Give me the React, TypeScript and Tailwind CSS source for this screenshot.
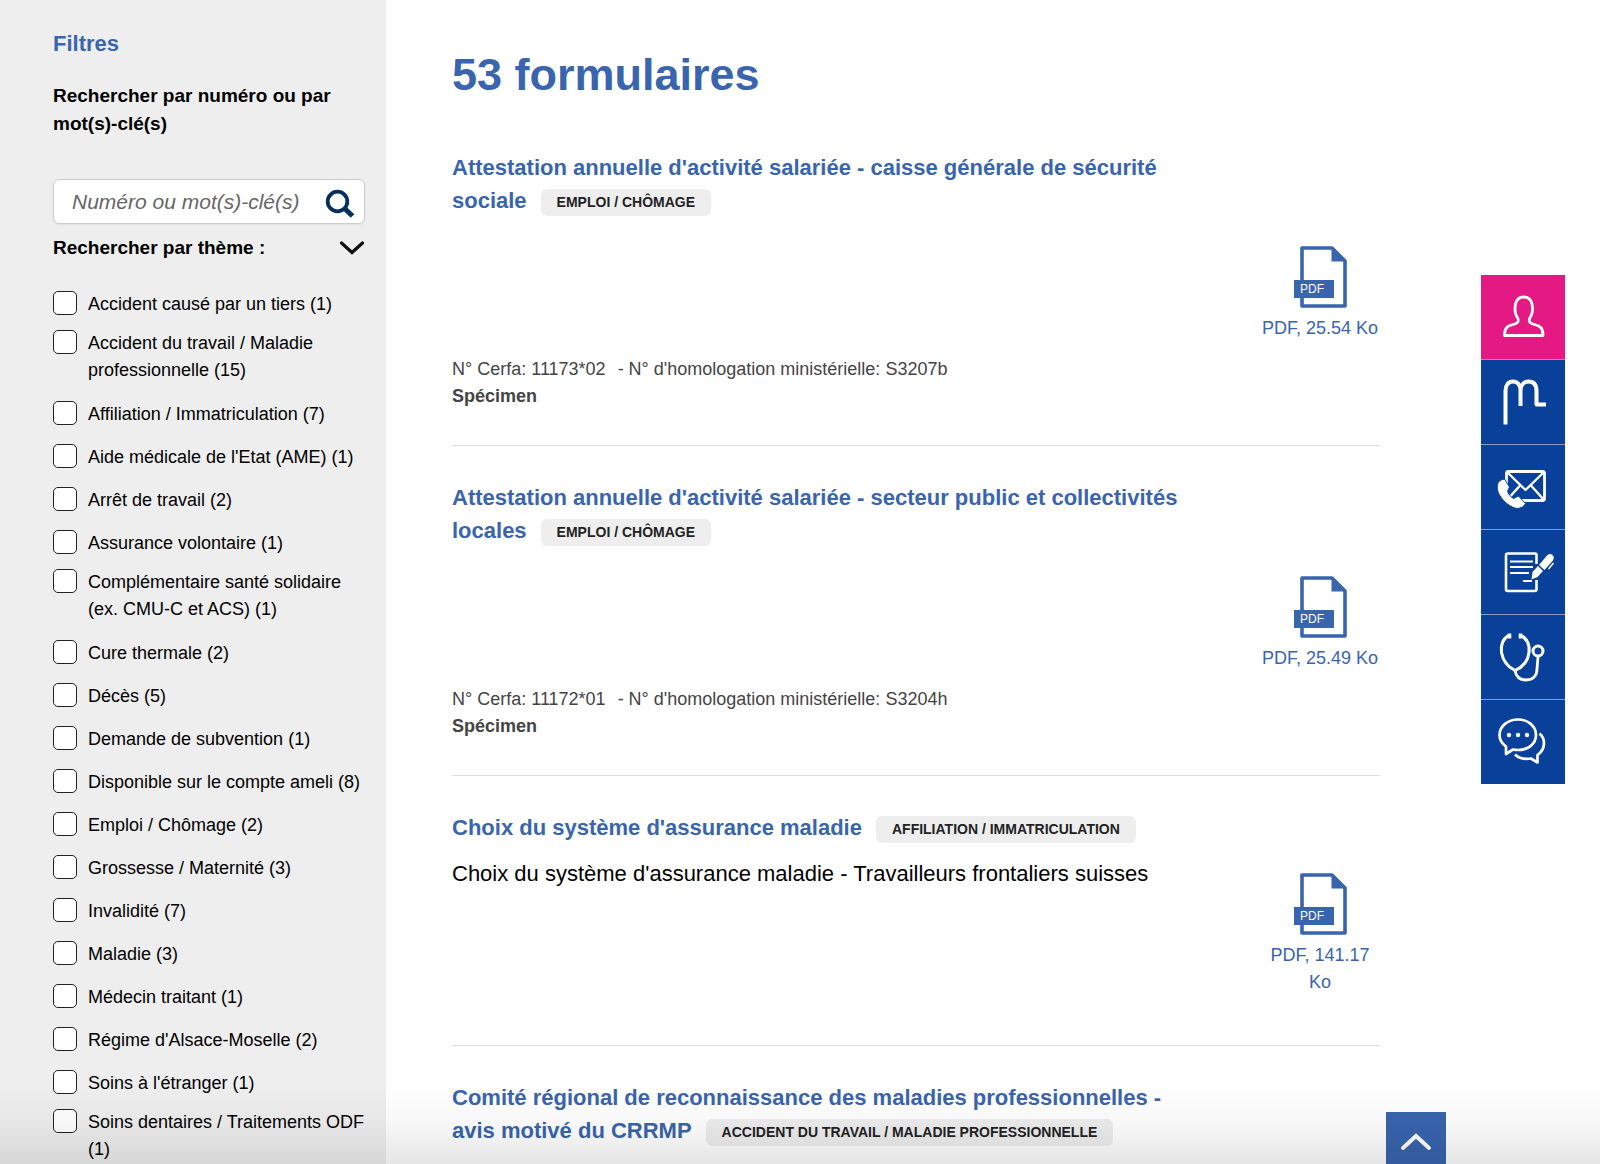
import { useState } from "react";

type Theme = {
  label: string;
  count: number;
  long?: boolean;
};

type Form = {
  title: string;
  tag: string;
  description?: string;
  size?: string;
  cerfa?: string;
  homologation?: string;
};

const themes: Theme[] = [
  { label: "Accident causé par un tiers", count: 1 },
  { label: "Accident du travail / Maladie professionnelle", count: 15, long: true },
  { label: "Affiliation / Immatriculation", count: 7 },
  { label: "Aide médicale de l'Etat (AME)", count: 1 },
  { label: "Arrêt de travail", count: 2 },
  { label: "Assurance volontaire", count: 1 },
  { label: "Complémentaire santé solidaire (ex. CMU-C et ACS)", count: 1, long: true },
  { label: "Cure thermale", count: 2 },
  { label: "Décès", count: 5 },
  { label: "Demande de subvention", count: 1 },
  { label: "Disponible sur le compte ameli", count: 8 },
  { label: "Emploi / Chômage", count: 2 },
  { label: "Grossesse / Maternité", count: 3 },
  { label: "Invalidité", count: 7 },
  { label: "Maladie", count: 3 },
  { label: "Médecin traitant", count: 1 },
  { label: "Régime d'Alsace-Moselle", count: 2 },
  { label: "Soins à l'étranger", count: 1 },
  { label: "Soins dentaires / Traitements ODF", count: 1, long: true },
];

const forms: Form[] = [
  {
    title: "Attestation annuelle d'activité salariée - caisse générale de sécurité sociale",
    tag: "Emploi / Chômage",
    size: "25.54 Ko",
    cerfa: "11173*02",
    homologation: "S3207b",
  },
  {
    title: "Attestation annuelle d'activité salariée - secteur public et collectivités locales",
    tag: "Emploi / Chômage",
    size: "25.49 Ko",
    cerfa: "11172*01",
    homologation: "S3204h",
  },
  {
    title: "Choix du système d'assurance maladie",
    tag: "Affiliation / Immatriculation",
    description: "Choix du système d'assurance maladie - Travailleurs frontaliers suisses",
    size: "141.17 Ko",
  },
  {
    title: "Comité régional de reconnaissance des maladies professionnelles - avis motivé du CRRMP",
    tag: "Accident du travail / Maladie professionnelle",
  },
];

function PdfIcon() {
  return (
    <svg width="54" height="62" viewBox="0 0 54 62" aria-hidden="true">
      <path d="M9 2H39L52 15V60H9Z" fill="#fff" stroke="#3965ae" strokeWidth="3.6" strokeLinejoin="round" />
      <path d="M38.500 1L53.500 15.500H38.500Z" fill="#3965ae" />
      <rect x="1" y="34" width="40" height="18" fill="#3965ae" />
      <text x="7" y="47" fill="#fff" fontSize="12" className="font-['Liberation_Sans']">
        PDF
      </text>
    </svg>
  );
}

// Shortcuts of the floating rail, drawn on an 84x84 tile
const shortcuts = [
  {
    name: "Compte ameli",
    icon: (
      <path d="M37 43.500C38 47 36.500 48.500 32 49.500C26 51 23.500 53 23.500 60.500H62C62 53 59.500 51 53.500 49.500C49 48.500 47.500 47 48.500 43.500C52 39 52 34 51 29C50 24.500 47 22 42.700 22C38.500 22 35.500 24.500 34.500 29C33.500 34 33.500 39 37 43.500Z" strokeWidth="2.8" />
    ),
  },
  {
    name: "Mon espace santé",
    icon: (
      <path d="M24.500 64.500V31C24.500 25 27.500 21.500 32 21.500C36.500 21.500 39.500 25 39.500 31V46M39.500 31C39.500 25 43 21.500 47.500 21.500C53 21.500 55.500 25 55.500 31V44.500H65" strokeWidth="4" />
    ),
  },
  {
    name: "Nous contacter",
    icon: (
      <>
        <rect x="25.500" y="26.500" width="38" height="29" rx="2" strokeWidth="2.8" />
        <path d="M26 27L44.500 45L63 27M26 55L39 40.500M63 55L50 40.500" strokeWidth="2.4" />
        <path d="M20 35C15.500 37 15 44 18.500 50C23 57.500 30 62.500 36 63.500C40 63.500 43.500 61 44.500 58.500L37.500 51L32.500 53.500C30 52 27.500 49.500 26.500 46.500L28.500 42L23.500 34Z" fill="#fff" stroke="#09409a" strokeWidth="1" />
      </>
    ),
  },
  {
    name: "Formulaires",
    icon: (
      <>
        <path d="M55.500 34V25Q55.500 23.500 54 23.500H27Q25 23.500 25 25.500V59Q25 61 27 61H53.500Q55.500 61 55.500 59V50" strokeWidth="2.6" />
        <path d="M29 31.500H52M29 37H52M29 43H48M42 51H51" strokeWidth="2" />
        <path d="M50.500 49.500L51.500 42L57 36L62 41L56.500 47Z" fill="#fff" stroke="none" />
        <path d="M58 35L65.500 26Q68.500 22.500 71.500 25Q74 27.500 71.500 31L63.500 40Z" fill="#fff" stroke="none" />
        <path d="M72.500 33L67.500 39" strokeWidth="1.4" />
      </>
    ),
  },
  {
    name: "Annuaire santé",
    icon: (
      <>
        <path d="M28 20.500C22 23 19.500 30 20.500 37.500C22 46 27 52 34 55.500C42 52 47 46 48 37.500C49 30 46 23 39.500 20.500" strokeWidth="3" />
        <path d="M28.500 18.500V23.500M39.500 18.500V23.500" strokeWidth="3.6" />
        <path d="M34 55.500C35 62 39.500 65 45 65C52 65 56 61 56 54L57 42" strokeWidth="2.8" />
        <circle cx="57" cy="36" r="5" strokeWidth="3" />
      </>
    ),
  },
  {
    name: "Forum",
    icon: (
      <>
        <path d="M25 46.500C21 43.500 18.500 39.500 18.500 35C18.500 26 27 19.500 37 19.500C47 19.500 55 26 55 35C55 44 47 50 37 50C35 50 33.500 49.800 32 49.500L25 54Z" strokeWidth="2.7" />
        <path d="M58.500 33.500C64.500 38.500 65 49 56.500 55V62.500L50 58.500C44 59.500 38 58.500 34 54.500" strokeWidth="2.7" />
        <circle cx="28" cy="35" r="2.200" fill="#fff" stroke="none" />
        <circle cx="37" cy="35" r="2.200" fill="#fff" stroke="none" />
        <circle cx="46" cy="35" r="2.200" fill="#fff" stroke="none" />
      </>
    ),
  },
];

function Sidebar() {
  const [query, setQuery] = useState("");
  const [open, setOpen] = useState(true);

  return (
    <aside className="w-[386px] shrink-0 bg-[#eeeeee] pt-[30px] pr-[21px] pl-[53px]">
      <h2 className="text-[22px] leading-7 font-bold text-[#3965ae]">Filtres</h2>

      <label htmlFor="search" className="mt-6 block text-[19px] leading-7 font-bold">
        Rechercher par numéro ou par mot(s)-clé(s)
      </label>

      {/* SEARCH */}
      <div className="mt-[41px] flex h-[45px] items-center rounded-md border border-[#cccccc] bg-white pr-2.5 pl-[18px] shadow-xs">
        <input
          id="search"
          type="text"
          value={query}
          onChange={(e) => setQuery(e.target.value)}
          placeholder="Numéro ou mot(s)-clé(s)"
          className="min-w-0 flex-1 text-[21px] leading-7 text-black outline-none placeholder:text-[#666666] placeholder:italic"
        />
        <button type="button" aria-label="Rechercher" className="mt-1">
          <svg width="29" height="29" viewBox="0 0 29 29" aria-hidden="true">
            <circle cx="12.500" cy="12.500" r="9.800" fill="none" stroke="#04305f" strokeWidth="3.8" />
            <path d="M18.500 18.500L27.500 27" stroke="#04305f" strokeWidth="5" />
          </svg>
        </button>
      </div>

      {/* THEMES */}
      <button
        type="button"
        onClick={() => setOpen(!open)}
        className="mt-2.5 flex w-full items-center justify-between text-left text-[19px] leading-7 font-bold"
      >
        Rechercher par thème :
        <svg width="26" height="14" viewBox="0 0 26 14" aria-hidden="true">
          <path d="M2.500 2L13 11.500L23.500 2" fill="none" stroke="#111" strokeWidth="3.2" strokeLinecap="round" />
        </svg>
      </button>

      {open && (
        <ul className="mt-[21px]">
          {themes.map((theme) => (
            <li key={theme.label}>
              <label className={`flex items-start gap-[11px] text-lg leading-[27px] ${theme.long ? "pt-1 pb-[9px]" : "py-2"}`}>
                <input
                  type="checkbox"
                  className="size-6 shrink-0 appearance-none rounded-[5px] border border-[#222222] bg-white checked:bg-[#3965ae]"
                />
                <span>{`${theme.label} (${theme.count})`}</span>
              </label>
            </li>
          ))}
        </ul>
      )}
    </aside>
  );
}

function FormItem({ form }: { form: Form }) {
  return (
    <li className="border-b border-[#dddddd] pb-[35px] not-first:pt-[35px] last:border-b-0 last:pb-0">
      <h2 className="w-4/5 text-[22px] leading-[33px] font-bold text-[#3965ae]">
        <a href="#formulaire">{form.title}</a>
        <span className="ml-3.5 inline-block rounded-md bg-[#eeeeee] px-4 align-middle text-sm leading-[27px] text-[#222222] uppercase">
          {form.tag}
        </span>
      </h2>

      {form.size && (
        <div className="flex justify-between pb-3.5">
          <p className="pt-[13px] text-[22px] leading-[33px]">{form.description}</p>
          <a href="#pdf" className="mt-[29px] flex w-[120px] flex-col items-center gap-[7px] text-center text-lg leading-[27px] text-[#3965ae]">
            <PdfIcon />
            <span>{`PDF, ${form.size}`}</span>
          </a>
        </div>
      )}

      {form.cerfa && (
        <div className="text-lg leading-[27px] text-[#444444]">
          <p>
            <span className="mr-3">{`N° Cerfa: ${form.cerfa}`}</span>
            <span>{`- N° d'homologation ministérielle: ${form.homologation}`}</span>
          </p>
          <p className="font-bold">Spécimen</p>
        </div>
      )}
    </li>
  );
}

export default function App() {
  return (
    <div className="flex h-screen overflow-hidden bg-white font-['Liberation_Sans',Arial,sans-serif] text-black">
      <Sidebar />

      <main className="flex-1 pt-[46px] pr-[220px] pl-[66px]">
        <h1 className="text-[45px] leading-[58px] font-bold text-[#3965ae]">53 formulaires</h1>
        <ul className="mt-[47px]">
          {forms.map((form) => (
            <FormItem key={form.title} form={form} />
          ))}
        </ul>
      </main>

      {/* SHORTCUT RAIL */}
      <nav className="fixed top-[275px] right-[35px] w-[84px] divide-y divide-[#8a9cc4]">
        {shortcuts.map((shortcut) => (
          <a
            key={shortcut.name}
            href="#raccourci"
            aria-label={shortcut.name}
            className="block bg-[#09409a] first:bg-[#e51983]"
          >
            <svg className="block w-full" viewBox="0 0 84 84" fill="none" stroke="#fff" strokeLinejoin="round" aria-hidden="true">
              {shortcut.icon}
            </svg>
          </a>
        ))}
      </nav>

      {/* BACK TO TOP */}
      <button
        type="button"
        aria-label="Haut de page"
        className="fixed right-[154px] bottom-0 flex h-[52px] w-[60px] items-center justify-center bg-[#3965ae] pt-2"
      >
        <svg width="32" height="18" viewBox="0 0 32 18" aria-hidden="true">
          <path d="M3 15L16 3L29 15" fill="none" stroke="#fff" strokeWidth="4" strokeLinecap="round" />
        </svg>
      </button>

      {/* Fade at the bottom of the window */}
      <div className="pointer-events-none fixed inset-x-0 bottom-0 h-20 bg-linear-to-t from-black/10 via-black/3 to-transparent" />
    </div>
  );
}
